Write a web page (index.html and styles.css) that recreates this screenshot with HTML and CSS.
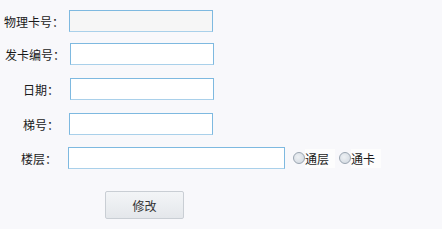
FILE: index.html
```html
<!DOCTYPE html>
<html lang="zh-CN">
<head>
    <meta charset="UTF-8">
    <title>修改卡信息</title>
    <link rel="stylesheet" href="styles.css">
</head>
<body>
    <div class="card-form">
        <div class="form-row row-1">
            <label class="form-label" for="cardNo">物理卡号：</label>
            <input type="text" id="cardNo" class="form-input readonly" readonly>
        </div>
        <div class="form-row row-2">
            <label class="form-label" for="issueNo">发卡编号：</label>
            <input type="text" id="issueNo" class="form-input">
        </div>
        <div class="form-row row-3">
            <label class="form-label short" for="date">日期：</label>
            <input type="text" id="date" class="form-input">
        </div>
        <div class="form-row row-4">
            <label class="form-label short" for="ladder">梯号：</label>
            <input type="text" id="ladder" class="form-input">
        </div>
        <div class="form-row row-5">
            <label class="form-label floor" for="floor">楼层：</label>
            <input type="text" id="floor" class="form-input wide">
            <label class="radio"><input type="radio" name="floorType"><span>通层</span></label>
            <label class="radio"><input type="radio" name="floorType"><span>通卡</span></label>
        </div>
        <div class="form-actions">
            <button type="button" class="btn">修改</button>
        </div>
    </div>
</body>
</html>
```

FILE: styles.css
```css
body {
    margin: 0;
    background: #f8f8fb;
    font-family: "Noto Sans CJK SC", "Liberation Sans", sans-serif;
    font-size: 12px;
    color: #1a1a1a;
}

.card-form {
    padding-top: 10px;
}

.form-row {
    display: flex;
    align-items: center;
    height: 22px;
}

.row-2 { margin-top: 11px; }
.row-3 { margin-top: 13px; }
.row-4 { margin-top: 13px; }
.row-5 { margin-top: 12px; }

.form-label {
    width: 69px;
    padding-left: 4px;
    box-sizing: border-box;
}

.row-2 .form-label { padding-left: 5px; width: 70px; }
.row-3 .form-label { width: 70px; }
.form-label.short { padding-left: 23px; }
.form-label.floor { padding-left: 21px; width: 68px; }

.form-input {
    box-sizing: border-box;
    width: 144px;
    height: 22px;
    margin: 0;
    padding: 2px 4px;
    border: 1px solid #7eb9e0;
    border-bottom-color: #a9d0ea;
    background: #fff;
    font: inherit;
    outline: none;
}

.form-input.readonly {
    background: #f6f6f6;
}

.form-input.wide {
    width: 217px;
}

.radio {
    display: flex;
    align-items: center;
    margin-left: 8px;
    height: 22px;
}

.radio + .radio {
    margin-left: 4px;
}

.radio input {
    appearance: none;
    -webkit-appearance: none;
    width: 12px;
    height: 12px;
    margin: 0;
    border: 1px solid #9aa5b1;
    border-radius: 50%;
    background: radial-gradient(circle at 40% 40%, #eef1f4, #cfd6de);
    box-sizing: border-box;
}

.radio span {
    background: #fdfdfd;
    padding: 1px 6px 1px 0;
}

.form-actions {
    margin-top: 22px;
    padding-left: 105px;
}

.btn {
    width: 79px;
    height: 28px;
    border: 1px solid #c9ced4;
    border-radius: 2px;
    background: linear-gradient(#f3f5f7, #e4e7eb);
    color: #333;
    font: inherit;
    font-size: 12px;
    cursor: pointer;
}
```
